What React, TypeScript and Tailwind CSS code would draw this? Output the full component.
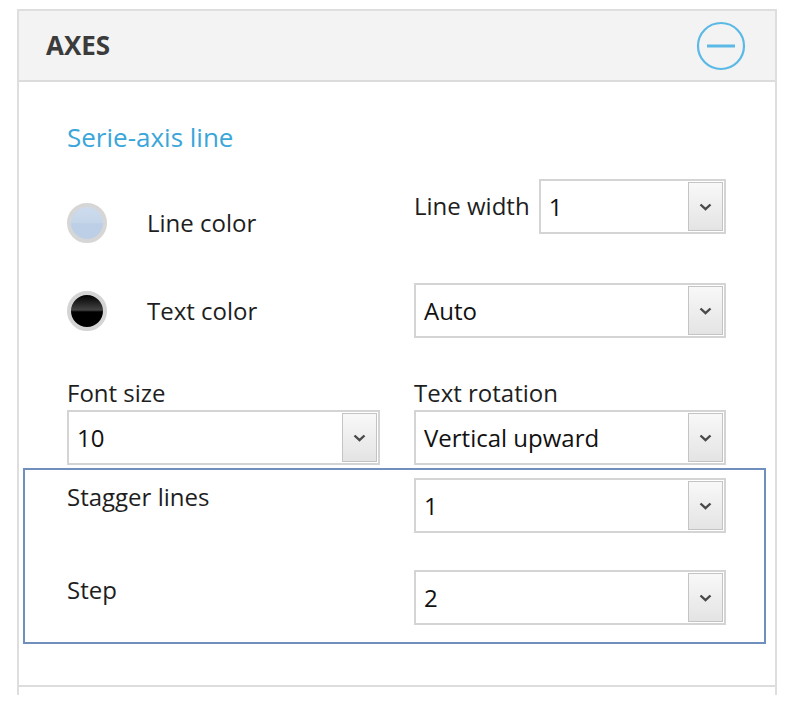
import React from "react";

const Chevron = () => (
  <svg width="13" height="8" viewBox="0 0 13 8" fill="none">
    <path d="M1.5 1.5 L6.5 6.2 L11.5 1.5" stroke="#4a4a4a" strokeWidth="2.4" />
  </svg>
);

const Select: React.FC<{ value: string; className?: string }> = ({ value, className = "" }) => (
  <div
    className={`h-[55px] flex items-stretch border-2 border-[#d4d4d4] bg-white ${className}`}
  >
    <div className="flex-1 flex items-center pl-[8px] text-[24px] text-[#111]">{value}</div>
    <div className="w-[35px] my-[1px] mr-[1px] flex items-center justify-center border border-[#c4c4c4] bg-gradient-to-b from-[#f8f8f8] to-[#e4e4e4]">
      <Chevron />
    </div>
  </div>
);

const Swatch: React.FC<{ dark?: boolean }> = ({ dark }) => (
  <div
    className={`w-[40px] h-[40px] rounded-full border-[4px] ${
      dark
        ? "border-[#d4d4d4] bg-[linear-gradient(to_bottom,#000_0%,#444_47%,#000_53%,#000_100%)]"
        : "border-[#d6d6d6] bg-[linear-gradient(to_bottom,#cddbed_0%,#c6d6ea_48%,#bccfe6_52%,#bccfe6_100%)]"
    }`}
  />
);

export default function App() {
  return (
    <div className="w-[800px] h-[705px] bg-white font-['Open_Sans',sans-serif] text-[#1e1e1e] overflow-hidden">
      <div className="ml-[17px] mt-[9px] w-[760px] h-[686px] border-x-2 border-t-2 border-[#dedede] flex flex-col">
        <div className="h-[71px] shrink-0 bg-[#f3f3f3] border-b-2 border-[#dcdcdc] flex items-center justify-between pl-[27px] pr-[29px]">
          <span className="text-[26px] font-bold text-[#3b3b3b]">AXES</span>
          <svg width="50" height="50" viewBox="0 0 50 50" fill="none">
            <circle cx="25" cy="25" r="23" stroke="#5bb9e6" strokeWidth="2.2" />
            <line x1="11" y1="25" x2="39" y2="25" stroke="#5bb9e6" strokeWidth="3" />
          </svg>
        </div>

        <div className="pl-[48px] pr-[47px]">
          <div className="mt-[39px] h-[32px] leading-[32px] text-[26px] text-[#3aa6d9]">
            Serie-axis line
          </div>

          <div className="mt-[26px] grid grid-cols-[313px_312px] gap-x-[34px]">
            <div className="h-[54px] pt-[24px]">
              <div className="flex items-center h-[40px]">
                <Swatch />
                <span className="ml-[40px] text-[24px]">Line color</span>
              </div>
            </div>
            <div className="flex items-start">
              <span className="mt-[11px] h-[32px] leading-[32px] text-[24px] whitespace-nowrap">Line width</span>
              <Select value="1" className="ml-[9px] flex-1 h-[55px]" />
            </div>
          </div>

          <div className="mt-[49px] grid grid-cols-[313px_312px] gap-x-[34px]">
            <div className="h-[55px] flex items-center">
              <Swatch dark />
              <span className="ml-[40px] text-[24px]">Text color</span>
            </div>
            <Select value="Auto" />
          </div>

          <div className="mt-[39px] grid grid-cols-[313px_312px] gap-x-[34px]">
            <div>
              <div className="h-[32px] leading-[32px] text-[24px]">Font size</div>
              <Select value="10" className="mt-[1px]" />
            </div>
            <div>
              <div className="h-[32px] leading-[32px] text-[24px]">Text rotation</div>
              <Select value="Vertical upward" className="mt-[1px]" />
            </div>
          </div>
        </div>

        <div className="ml-[4px] mt-[3px] w-[743px] h-[176px] border-2 border-[#6f8fbc] pl-[42px]">
          <div className="mt-[8px] grid grid-cols-[313px_312px] gap-x-[34px]">
            <div className="mt-[3px] h-[32px] leading-[32px] text-[24px]">Stagger lines</div>
            <Select value="1" />
          </div>
          <div className="mt-[37px] grid grid-cols-[313px_312px] gap-x-[34px]">
            <div className="mt-[4px] h-[32px] leading-[32px] text-[24px]">Step</div>
            <Select value="2" />
          </div>
        </div>

        <div className="mt-[41px] h-[2px] bg-[#dddddd]" />
      </div>
    </div>
  );
}
